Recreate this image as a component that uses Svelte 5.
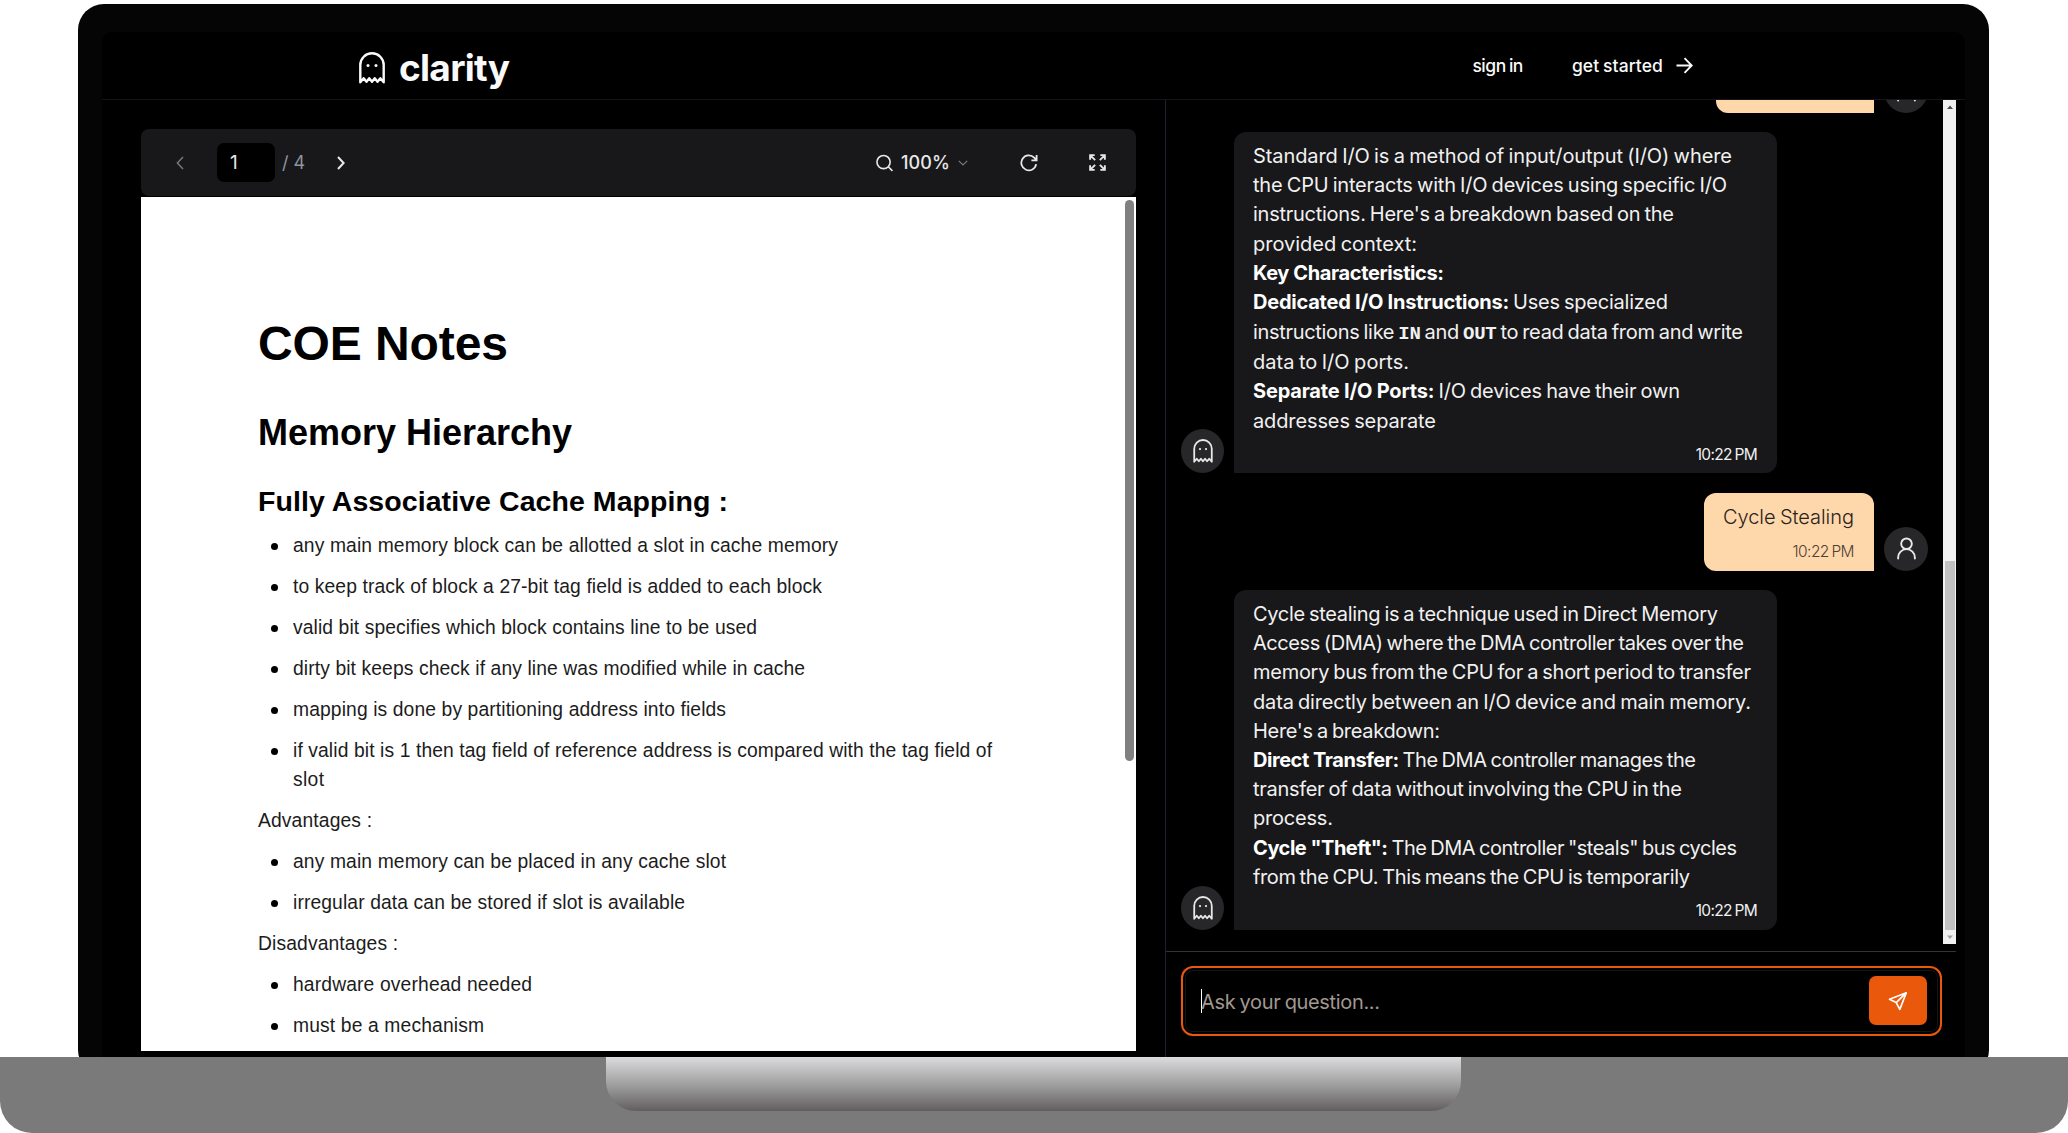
<script>
  // Adjusts tracking so that a line of text spans the given width.
  function fit(node, width) {
    const natural = node.getBoundingClientRect().width;
    const gaps = node.textContent.length - 1;
    if (gaps > 0) node.style.letterSpacing = `${(width - natural) / gaps}px`;
  }

  const notes = [
    { items: [
      [['any main memory block can be allotted a slot in cache memory', 545]],
      [['to keep track of block a 27-bit tag field is added to each block', 529]],
      [['valid bit specifies which block contains line to be used', 464]],
      [['dirty bit keeps check if any line was modified while in cache', 512]],
      [['mapping is done by partitioning address into fields', 433]],
      [['if valid bit is 1 then tag field of reference address is compared with the tag field of', 699], ['slot', 31]]
    ] },
    { title: 'Advantages :', width: 114, items: [
      [['any main memory can be placed in any cache slot', 433]],
      [['irregular data can be stored if slot is available', 392]]
    ] },
    { title: 'Disadvantages :', width: 140, items: [
      [['hardware overhead needed', 239]],
      [['must be a mechanism', 191]]
    ] }
  ];

  // Each line is a list of [text, style] runs and a width.
  const standardIo = [
    { w: 479, runs: [['Standard I/O is a method of input/output (I/O) where']] },
    { w: 474, runs: [['the CPU interacts with I/O devices using specific I/O']] },
    { w: 421, runs: [["instructions. Here's a breakdown based on the"]] },
    { w: 164, runs: [['provided context:']] },
    { w: 191, runs: [['Key Characteristics:', 'strong']] },
    { w: 415, runs: [['Dedicated I/O Instructions:', 'strong'], [' Uses specialized']] },
    { w: 490, tall: true, runs: [['instructions like '], ['IN', 'code'], [' and '], ['OUT', 'code'], [' to read data from and write']] },
    { w: 156, runs: [['data to I/O ports.']] },
    { w: 427, runs: [['Separate I/O Ports:', 'strong'], [' I/O devices have their own']] },
    { w: 183, runs: [['addresses separate']] }
  ];
  const cycleStealing = [
    { w: 465, runs: [['Cycle stealing is a technique used in Direct Memory']] },
    { w: 491, runs: [['Access (DMA) where the DMA controller takes over the']] },
    { w: 498, runs: [['memory bus from the CPU for a short period to transfer']] },
    { w: 498, runs: [['data directly between an I/O device and main memory.']] },
    { w: 187, runs: [["Here's a breakdown:"]] },
    { w: 443, runs: [['Direct Transfer:', 'strong'], [' The DMA controller manages the']] },
    { w: 429, runs: [['transfer of data without involving the CPU in the']] },
    { w: 80, runs: [['process.']] },
    { w: 484, runs: [['Cycle "Theft":', 'strong'], [' The DMA controller "steals" bus cycles']] },
    { w: 437, runs: [['from the CPU. This means the CPU is temporarily']] }
  ];
</script>

{#snippet ghost(cls)}
  <svg class={cls} viewBox="0 0 26 32" fill="none" stroke="currentColor" stroke-width="2.4" stroke-linejoin="round">
    <path d="M1.3 30.3V13a11.7 11.7 0 0 1 23.4 0v17.3l-3.4-4-2.8 3.4-2.75-3.4-2.75 3.4-2.75-3.4-2.75 3.4-2.8-3.4z" />
    <circle cx="9" cy="13.4" r="1.5" fill="currentColor" stroke="none" />
    <circle cx="17" cy="13.4" r="1.5" fill="currentColor" stroke="none" />
  </svg>
{/snippet}

{#snippet person()}
  <svg class="person" viewBox="0 0 20 24" fill="none" stroke="currentColor" stroke-width="2" stroke-linecap="round">
    <circle cx="10" cy="7" r="5.6" />
    <path d="M1.2 22.5v-1a8.8 8.8 0 0 1 17.6 0v1" />
  </svg>
{/snippet}

{#snippet reply(lines, size)}
  <div class="row">
    <div class="avatar">{@render ghost('ghost')}</div>
    <div class="bubble bot {size}">
      {#each lines as line}
        <div class="line" class:tall={line.tall}><span class="fit" use:fit={line.w}>{#each line.runs as [text, kind]}<span class={kind}>{text}</span>{/each}</span></div>
      {/each}
      <div class="time"><span class="fit" use:fit={62}>10:22 PM</span></div>
    </div>
  </div>
{/snippet}

<div class="stage">
  <div class="laptop">
    <div class="screen">
      <header>
        <div class="brand">
          {@render ghost('logo')}
          <span class="name"><span class="fit" use:fit={111}>clarity</span></span>
        </div>
        <nav>
          <span class="fit" use:fit={51}>sign in</span>
          <span class="fit" use:fit={91}>get started</span>
          <svg class="arrow" viewBox="0 0 18 18" fill="none" stroke="currentColor" stroke-width="2"><path d="M0.5 9H16.5M9 1.2L16.7 9L9 16.8" /></svg>
        </nav>
      </header>

      <main>
        <section class="viewer">
          <div class="toolbar">
            <svg class="prev" viewBox="0 0 8 14" fill="none" stroke="currentColor" stroke-width="1.5"><path d="M7 1L1.4 7L7 13" /></svg>
            <div class="page">1</div>
            <span class="total">/ 4</span>
            <svg class="next" viewBox="0 0 8 14" fill="none" stroke="currentColor" stroke-width="2"><path d="M1 1L6.6 7L1 13" /></svg>
            <div class="spacer"></div>
            <svg class="lens" viewBox="0 0 18 18" fill="none" stroke="currentColor" stroke-width="1.7"><circle cx="8" cy="8" r="7" /><path d="M13 13L17.4 17.4" /></svg>
            <span class="zoom"><span class="fit" use:fit={49}>100%</span></span>
            <svg class="down" viewBox="0 0 10 6" fill="none" stroke="currentColor" stroke-width="1.2"><path d="M0.8 0.8L5 5L9.2 0.8" /></svg>
            <svg class="reload" viewBox="0 0 18 18" fill="none" stroke="currentColor" stroke-width="1.8"><path d="M16.2 10.2A7.5 7.5 0 1 1 14.2 3.6L16.4 6M16.6 1V6.4H11.4" /></svg>
            <svg class="full" viewBox="0 0 18 18" fill="none" stroke="currentColor" stroke-width="2"><path d="M1.2 6V1.2H6M12 1.2h4.8V6M16.8 12v4.8H12M6 16.8H1.2V12M1.5 1.5L6.5 6.5M16.5 1.5L11.5 6.5M16.5 16.5L11.5 11.5M1.5 16.5L6.5 11.5" /></svg>
          </div>
          <div class="paper">
            <article>
              <h1><span class="fit" use:fit={250}>COE Notes</span></h1>
              <h2><span class="fit" use:fit={314}>Memory Hierarchy</span></h2>
              <h3><span class="fit" use:fit={470}>Fully Associative Cache Mapping :</span></h3>
              {#each notes as block}
                {#if block.title}<p><span class="fit" use:fit={block.width}>{block.title}</span></p>{/if}
                <ul>
                  {#each block.items as item}
                    <li>{#each item as [text, width]}<div><span class="fit" use:fit={width}>{text}</span></div>{/each}</li>
                  {/each}
                </ul>
              {/each}
            </article>
            <div class="thumb"></div>
          </div>
        </section>

        <section class="chat">
          <div class="history">
            <div class="messages">
              <div class="row mine">
                <div class="bubble user first"></div>
                <div class="avatar">{@render person()}</div>
              </div>
              {@render reply(standardIo, 'long')}
              <div class="row mine">
                <div class="bubble user">
                  <div class="line"><span class="fit" use:fit={131}>Cycle Stealing</span></div>
                  <div class="time"><span class="fit" use:fit={62}>10:22 PM</span></div>
                </div>
                <div class="avatar">{@render person()}</div>
              </div>
              {@render reply(cycleStealing, 'short')}
            </div>
            <div class="scrollbar">
              <svg class="cap" viewBox="0 0 12 14"><path d="M3 9L6 5.6L9 9z" fill="#505050" /></svg>
              <div class="grip"></div>
              <svg class="cap" viewBox="0 0 12 14"><path d="M3 5.5L6 9L9 5.5z" fill="#a3a3a3" /></svg>
            </div>
          </div>
          <div class="composer">
            <div class="field">
              <div class="inner">
                <div class="caret"></div>
                <span class="placeholder"><span class="fit" use:fit={179}>Ask your question...</span></span>
                <div class="send">
                  <svg viewBox="0 0 20 20" fill="none" stroke="currentColor" stroke-width="1.7" stroke-linejoin="round"><path d="M18.3 1.7L1.5 8.2L8.2 11.6L11.8 18.4zM18.3 1.7L8.2 11.6" /></svg>
                </div>
              </div>
            </div>
          </div>
        </section>
      </main>
    </div>
  </div>
  <div class="base"><div class="notch"></div></div>
</div>

<style>
  :global(body) { margin: 0; background: #fff; }
  * { box-sizing: border-box; }
  svg { display: block; flex: none; }
  .fit { display: inline-block; white-space: pre; }
  .stage {
    width: 2068px; height: 1133px; padding-top: 4px; overflow: hidden;
    display: flex; flex-direction: column; align-items: center;
    font-family: Inter, "Liberation Sans", sans-serif; color: #fafafa;
  }
  .laptop {
    flex: none; width: 1911px; height: 1072px; margin-right: 1px; padding: 28px 24px 0;
    background: #050505; border-radius: 26px; overflow: hidden;
  }
  .screen { height: 1044px; background: #000; border-radius: 10px 10px 0 0; }
  header {
    height: 68px; padding: 0 272px 0 257px; border-bottom: 1px solid #14141d;
    display: flex; justify-content: space-between;
  }
  .brand { display: flex; gap: 14px; padding-top: 20px; }
  .logo { width: 26px; height: 32px; }
  .name { font-size: 37px; font-weight: 700; line-height: 44px; margin-top: -6px; }
  nav { display: flex; align-items: center; font-size: 17.5px; font-weight: 500; line-height: 24px; word-spacing: -1px; }
  nav .fit + .fit { margin-left: 49px; }
  .arrow { width: 17px; height: 17px; margin-left: 13px; }
  main { display: flex; height: 957px; }

  .viewer { width: 1063px; padding: 29px 29px 6px 39px; flex: none; }
  .toolbar {
    height: 67px; background: #18181a; border-radius: 8px; color: #e8e8e8;
    display: flex; align-items: center; padding: 0 30px 0 35px; margin-bottom: 1px;
  }
  .prev { width: 8px; height: 14px; color: #77777b; }
  .page {
    width: 58px; height: 39px; margin-left: 33px; padding-left: 13px;
    background: #000; border-radius: 7px; font-size: 19px; line-height: 39px;
  }
  .total { margin-left: 7px; width: 24px; font-size: 18px; color: #8d95a3; white-space: nowrap; }
  .next { width: 8px; height: 14px; margin-left: 31px; }
  .spacer { flex: 1; }
  .lens { width: 17px; height: 18px; }
  .zoom { width: 48px; margin-left: 8px; font-size: 18px; font-weight: 500; }
  .down { width: 10px; height: 6px; margin-left: 9px; color: #77777b; }
  .reload { width: 18px; height: 18px; margin-left: 52px; }
  .full { width: 17px; height: 17px; margin-left: 51px; }
  .paper { height: 854px; background: #fff; display: flex; justify-content: space-between; overflow: hidden; }
  .thumb { width: 9px; height: 561px; margin: 3px 2px 0 0; background: #808080; border-radius: 5px; }
  article { padding: 118px 0 0 117px; font-family: "Liberation Sans", Arial, sans-serif; color: #000; }
  h1, h2, h3, p, ul, li { margin: 0; padding: 0; }
  h1 { font-size: 48px; line-height: 58px; }
  h2 { font-size: 36px; line-height: 44px; margin-top: 38px; }
  h3 { font-size: 28.5px; line-height: 36px; margin-top: 28px; }
  ul { list-style: none; }
  li, p { font-size: 19.3px; line-height: 29px; margin-bottom: 12px; color: #1c1c1c; }
  li { padding-left: 35px; position: relative; }
  li::before {
    content: ""; position: absolute; left: 13px; top: 12px; width: 7px; height: 7px;
    border-radius: 50%; background: #000;
  }
  h3 + ul { margin-top: 12px; }

  .chat { flex: 1; border-left: 1px solid #1c222b; padding-right: 9px; }
  .history { height: 844px; display: flex; overflow: hidden; }
  .messages {
    flex: 1; padding: 0 15px 14px 15px; display: flex; flex-direction: column;
    justify-content: flex-end; gap: 19.5px;
  }
  .row { display: flex; align-items: flex-end; gap: 10px; flex: none; }
  .mine { justify-content: flex-end; }
  .avatar {
    width: 43px; height: 44px; border-radius: 50%; background: #27272a; color: #e8e8e8;
    display: flex; align-items: center; justify-content: center; flex: none;
  }
  .mine .avatar { width: 44px; }
  .ghost { width: 20px; height: 24px; }
  .person { width: 19px; height: 23px; }
  .bubble { border-radius: 12px; padding: 10px 20px 8px 19px; font-size: 20px; word-spacing: -1.2px; }
  .bot { width: 543px; background: #18181a; border-bottom-left-radius: 0; color: #f1f1f1; }
  .long { height: 341px; }
  .short { height: 340px; }
  .user { width: 170px; height: 78px; background: #fed7aa; color: #2a231c; border-bottom-right-radius: 0; font-weight: 300; }
  .user.first { width: 158px; }
  .line { height: 29.2px; line-height: 29.2px; white-space: nowrap; }
  .tall { height: 31px; line-height: 30px; }
  .strong { font-weight: 700; color: #fff; word-spacing: 0; }
  .code { font-family: "Liberation Mono", monospace; font-size: 19px; font-weight: 700; line-height: 1; }
  .time { text-align: right; font-size: 15.5px; line-height: 20px; margin-top: 9px; }
  .user .time { margin-top: 10px; color: #4c4135; }
  .scrollbar { width: 13px; background: #f1f1f1; display: flex; flex-direction: column; justify-content: space-between; align-items: center; }
  .cap { width: 12px; height: 14px; }
  .grip { width: 10px; height: 369px; background: #c1c1c1; margin-top: auto; }
  .composer { margin-top: 7px; border-top: 1px solid #333; padding: 14px 14px 0 15px; }
  .field { width: 761px; height: 70px; border: 2px solid #ea580c; border-radius: 12px; padding: 2px; }
  .inner {
    height: 62px; border: 1px solid #141414; border-radius: 8px; padding: 0 10px 0 15px;
    display: flex; align-items: center;
  }
  .caret { width: 1px; height: 24px; margin-right: -1px; background: #fff; }
  .placeholder { flex: 1; padding-top: 2px; font-size: 20px; word-spacing: -1px; color: #a1988f; }
  .send {
    width: 58px; height: 49px; margin-top: -1px; border-radius: 7px; background: #ea580c; color: #fff;
    display: flex; align-items: center; justify-content: center;
  }
  .send svg { width: 20px; height: 20px; }
  .base {
    flex: none; width: 2068px; height: 76px; margin-top: -19px; background: #7a7a7a; z-index: 1;
    border-radius: 0 0 32px 32px; display: flex; justify-content: center;
  }
  .notch {
    width: 855px; height: 54px; margin-right: 1px; border-radius: 0 0 30px 30px;
    background: linear-gradient(#dcdbdd, #9b9b9b 55%, #625e5f);
  }
</style>
